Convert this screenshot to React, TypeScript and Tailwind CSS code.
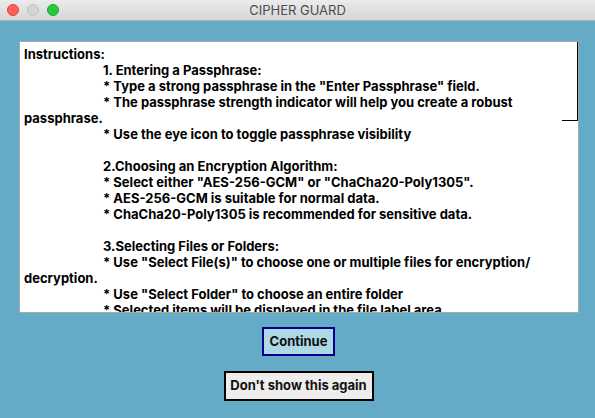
import React from "react";

type Line = { text: React.ReactNode; indent?: boolean };

const lines: Line[] = [
  { text: "Instructions:" },
  { text: "1. Entering a Passphrase:", indent: true },
  { text: '* Type a strong passphrase in the "Enter Passphrase" field.', indent: true },
  {
    text: "* The passphrase strength indicator will help you create a robust passphrase.",
    indent: true,
  },
  { text: "* Use the eye icon to toggle passphrase visibility", indent: true },
  { text: "" },
  { text: "2.Choosing an Encryption Algorithm:", indent: true },
  { text: '* Select either "AES-256-GCM" or "ChaCha20-Poly1305".', indent: true },
  { text: "* AES-256-GCM is suitable for normal data.", indent: true },
  { text: "* ChaCha20-Poly1305 is recommended for sensitive data.", indent: true },
  { text: "" },
  { text: "3.Selecting Files or Folders:", indent: true },
  {
    text: (
      <>
        * Use "Select File(s)" to choose one or multiple files for encryption/
        <wbr />
        decryption.
      </>
    ),
    indent: true,
  },
  { text: '* Use "Select Folder" to choose an entire folder', indent: true },
  { text: "* Selected items will be displayed in the file label area.", indent: true },
];

const App = () => {
  return (
    <div
      className="w-[595px] h-[418px] bg-[#63abc6] flex flex-col overflow-hidden"
      style={{ fontFamily: "Inter, 'Noto Sans', sans-serif" }}
    >
      {/* Title bar */}
      <div className="relative h-[21px] shrink-0 flex items-center justify-center bg-gradient-to-b from-[#ebebeb] to-[#d6d6d6] border-b border-[#b1b1b1]">
        <div className="absolute left-[7px] top-[4px] flex gap-[8px]">
          <span className="w-[12px] h-[12px] rounded-full bg-[#fe5f57] border border-[#e2463f]" />
          <span className="w-[12px] h-[12px] rounded-full bg-[#d4d4d4] border border-[#c2c2c2]" />
          <span className="w-[12px] h-[12px] rounded-full bg-[#28c93f] border border-[#14ae2a]" />
        </div>
        <span className="text-[13px] text-[#4d4d4d] leading-none">CIPHER GUARD</span>
      </div>

      {/* Instructions text box */}
      <div className="relative mt-[20px] ml-[19px] w-[560px] h-[272px] bg-white border border-[#a9a9a9] overflow-hidden">
        <div className="pl-[4px] pr-[6px] pt-[4px] text-[13px] leading-[16px] font-bold text-black">
          {lines.map((line, i) => (
            <div key={i} className="min-h-[16px]">
              {line.indent && <span className="inline-block w-[79px]" />}
              {line.text}
            </div>
          ))}
        </div>
        <div className="absolute right-0 top-0 w-[16px] h-[79px] border-r border-b border-black" />
      </div>

      {/* Buttons */}
      <div className="flex flex-col items-center pl-[2px]">
        <button className="mt-[14px] w-[73px] h-[29px] bg-[#add8e6] border-2 border-[#00008b] text-[13px] font-bold text-[#111]">
          Continue
        </button>
        <button className="mt-[15px] w-[150px] h-[30px] bg-[#eeedeb] border-2 border-black text-[13px] font-bold text-[#111]">
          Don't show this again
        </button>
      </div>
    </div>
  );
};

export default App;
